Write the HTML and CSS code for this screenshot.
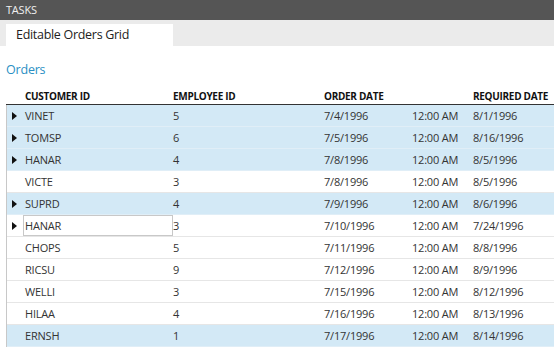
FILE: index.html
```html
<!DOCTYPE html>
<html>
<head>
<meta charset="utf-8">
<link rel="stylesheet" href="styles.css">
</head>
<body>
<div class="topbar">TASKS</div>
<div class="tabstrip"><div class="tab">Editable Orders Grid</div></div>
<div class="content">
  <div class="title">Orders</div>
  <div class="grid">
    <div class="row head">
      <div class="ind"></div>
      <div class="c1">CUSTOMER ID</div>
      <div class="c2">EMPLOYEE ID</div>
      <div class="c3">ORDER DATE</div>
      <div class="c4"></div>
      <div class="c5">REQUIRED DATE</div>
    </div>
    <div class="row sel"><div class="ind"><span class="arrow"></span></div><div class="c1">VINET</div><div class="c2">5</div><div class="c3">7/4/1996</div><div class="c4">12:00 AM</div><div class="c5">8/1/1996</div></div>
    <div class="row sel"><div class="ind"><span class="arrow"></span></div><div class="c1">TOMSP</div><div class="c2">6</div><div class="c3">7/5/1996</div><div class="c4">12:00 AM</div><div class="c5">8/16/1996</div></div>
    <div class="row sel"><div class="ind"><span class="arrow"></span></div><div class="c1">HANAR</div><div class="c2">4</div><div class="c3">7/8/1996</div><div class="c4">12:00 AM</div><div class="c5">8/5/1996</div></div>
    <div class="row"><div class="ind"></div><div class="c1">VICTE</div><div class="c2">3</div><div class="c3">7/8/1996</div><div class="c4">12:00 AM</div><div class="c5">8/5/1996</div></div>
    <div class="row sel"><div class="ind"><span class="arrow"></span></div><div class="c1">SUPRD</div><div class="c2">4</div><div class="c3">7/9/1996</div><div class="c4">12:00 AM</div><div class="c5">8/6/1996</div></div>
    <div class="row"><div class="ind"><span class="arrow"></span></div><div class="c1 edit">HANAR</div><div class="c2">3</div><div class="c3">7/10/1996</div><div class="c4">12:00 AM</div><div class="c5">7/24/1996</div></div>
    <div class="row"><div class="ind"></div><div class="c1">CHOPS</div><div class="c2">5</div><div class="c3">7/11/1996</div><div class="c4">12:00 AM</div><div class="c5">8/8/1996</div></div>
    <div class="row"><div class="ind"></div><div class="c1">RICSU</div><div class="c2">9</div><div class="c3">7/12/1996</div><div class="c4">12:00 AM</div><div class="c5">8/9/1996</div></div>
    <div class="row"><div class="ind"></div><div class="c1">WELLI</div><div class="c2">3</div><div class="c3">7/15/1996</div><div class="c4">12:00 AM</div><div class="c5">8/12/1996</div></div>
    <div class="row"><div class="ind"></div><div class="c1">HILAA</div><div class="c2">4</div><div class="c3">7/16/1996</div><div class="c4">12:00 AM</div><div class="c5">8/13/1996</div></div>
    <div class="row sel"><div class="ind"></div><div class="c1">ERNSH</div><div class="c2">1</div><div class="c3">7/17/1996</div><div class="c4">12:00 AM</div><div class="c5">8/14/1996</div></div>
  </div>
</div>
</body>
</html>
```
FILE: styles.css
```css
html, body {
  margin: 0;
  padding: 0;
  background: #fff;
  overflow: hidden;
  font-family: "Open Sans", "Noto Sans", sans-serif;
}
.topbar {
  height: 20px;
  background: #555555;
  color: #f0f0f0;
  font-size: 11px;
  line-height: 20px;
  padding-left: 6px;
  letter-spacing: -0.2px;
}
.tabstrip {
  height: 26px;
  background: #ebebeb;
  display: flex;
  align-items: flex-end;
  padding-left: 6px;
}
.tab {
  width: 157px;
  height: 22px;
  background: #fff;
  padding-left: 10px;
  font-size: 12.5px;
  line-height: 22px;
  color: #222;
  letter-spacing: -0.3px;
}
.content {
  padding-left: 6px;
}
.title {
  color: #2a8fc4;
  font-size: 12.5px;
  height: 44px;
  line-height: 18px;
  padding-top: 15px;
  box-sizing: border-box;
  letter-spacing: -0.2px;
}
.grid {
  border-left: 1px solid #c8c8c8;
}
.row {
  display: flex;
  height: 22px;
  box-sizing: border-box;
  border-bottom: 1px solid #e6e6e6;
  font-size: 11px;
  line-height: 21px;
  color: #333;
  letter-spacing: -0.2px;
}
.row.head {
  height: 16px;
  line-height: 14px;
  border-bottom: 1px solid #333;
  font-weight: bold;
  font-size: 10px;
  color: #111;
  margin-left: -1px;
  padding-left: 1px;
  background: #fff;
  margin-top: -1px;
  letter-spacing: -0.3px;
}
.row.sel {
  background: #d3e9f6;
  border-bottom-color: #e0eef7;
}
.ind {
  width: 16px;
  flex: none;
  display: flex;
  align-items: center;
  padding-left: 5px;
  box-sizing: border-box;
}
.arrow {
  width: 0;
  height: 0;
  border-top: 4px solid transparent;
  border-bottom: 4px solid transparent;
  border-left: 5px solid #111;
}
.c1 { width: 150px; flex: none; padding-left: 2px; box-sizing: border-box; }
.c2 { width: 151px; flex: none; }
.c3 { width: 88px; flex: none; }
.c4 { width: 61px; flex: none; }
.c5 { flex: 1; white-space: nowrap; }
.c1.edit {
  border: 1px solid #c8c8c8;
  background: #fff;
  height: 21px;
  line-height: 19px;
  padding-left: 1px;
}
```
